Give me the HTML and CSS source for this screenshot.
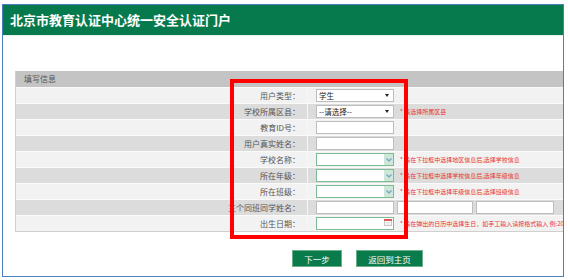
FILE: index.html
```html
<!DOCTYPE html>
<html lang="zh-CN">
<head>
  <meta charset="UTF-8" />
  <title>北京市教育认证中心统一安全认证门户</title>
  <link rel="stylesheet" href="styles.css">
</head>
<body>
  <div class="frame">
    <div class="top-bar">北京市教育认证中心统一安全认证门户</div>

    <div class="form-table">
      <div class="caption">填写信息</div>

      <div class="row">
        <div class="label">用户类型：</div>
        <div class="field">
          <div class="select"><span>学生</span><i class="arrow"></i></div>
        </div>
      </div>

      <div class="row">
        <div class="label">学校所属区县：</div>
        <div class="field">
          <div class="select"><span>--请选择--</span><i class="arrow"></i></div>
          <span class="hint">* 请选择所属区县</span>
        </div>
      </div>

      <div class="row">
        <div class="label">教育ID号：</div>
        <div class="field"><div class="input"></div></div>
      </div>

      <div class="row">
        <div class="label">用户真实姓名：</div>
        <div class="field"><div class="input"></div></div>
      </div>

      <div class="row">
        <div class="label">学校名称：</div>
        <div class="field">
          <div class="combo">
            <span class="combo-btn">
              <svg width="6" height="4" viewBox="0 0 6 4"><path d="M0.5 0.5 L3 3 L5.5 0.5" fill="none" stroke="#6a9fd4" stroke-width="1.1"/></svg>
            </span>
          </div>
          <span class="hint">* 请在下拉框中选择地区信息后,选择学校信息</span>
        </div>
      </div>

      <div class="row">
        <div class="label">所在年级：</div>
        <div class="field">
          <div class="combo">
            <span class="combo-btn">
              <svg width="6" height="4" viewBox="0 0 6 4"><path d="M0.5 0.5 L3 3 L5.5 0.5" fill="none" stroke="#6a9fd4" stroke-width="1.1"/></svg>
            </span>
          </div>
          <span class="hint">* 请在下拉框中选择学校信息后,选择年级信息</span>
        </div>
      </div>

      <div class="row">
        <div class="label">所在班级：</div>
        <div class="field">
          <div class="combo">
            <span class="combo-btn">
              <svg width="6" height="4" viewBox="0 0 6 4"><path d="M0.5 0.5 L3 3 L5.5 0.5" fill="none" stroke="#6a9fd4" stroke-width="1.1"/></svg>
            </span>
          </div>
          <span class="hint">* 请在下拉框中选择年级信息后,选择班级信息</span>
        </div>
      </div>

      <div class="row">
        <div class="label">三个同班同学姓名：</div>
        <div class="field trio">
          <div class="input"></div>
          <div class="input narrow"></div>
          <div class="input"></div>
        </div>
      </div>

      <div class="row">
        <div class="label">出生日期：</div>
        <div class="field">
          <div class="combo date">
            <svg class="cal" width="8" height="7" viewBox="0 0 8 7">
              <rect x="0.5" y="0.5" width="7" height="6" fill="#fff" stroke="#c8c8c8"/>
              <rect x="0" y="0" width="8" height="2" fill="#e2585a"/>
              <path d="M1.5 3.5 H6.5 M1.5 5 H6.5" stroke="#d6d6d6" stroke-width="0.8"/>
            </svg>
          </div>
          <span class="hint">* 请在弹出的日历中选择生日，如手工输入请按格式输入 例:2010-01-01</span>
        </div>
      </div>
    </div>

    <div class="actions">
      <button class="btn">下一步</button>
      <button class="btn wide">返回到主页</button>
    </div>
  </div>

  <div class="highlight"></div>
</body>
</html>
```

FILE: styles.css
```css
body {
  margin: 0;
  font-family: "Noto Sans CJK SC", "Noto Sans", sans-serif;
  background-color: #fff;
  width: 568px;
  height: 280px;
  position: relative;
  overflow: hidden;
}

.frame {
  margin: 4px 0 0 2px;
  width: 560px;
  height: 271px;
  border: 1px solid #4a7fc0;
  overflow: hidden;
}

.top-bar {
  height: 30px;
  line-height: 30px;
  background-color: #067a4c;
  color: #fff;
  font-size: 13px;
  font-weight: bold;
  padding-left: 7px;
  border-bottom: 1px solid #e6efe9;
}

.form-table {
  margin: 35px 0 0 12px;
  border-left: 1px solid #cfcfcf;
  border-bottom: 1px solid #cfcfcf;
}

.caption {
  height: 16px;
  line-height: 16px;
  background-color: #c4c4c4;
  color: #555;
  font-size: 8px;
  padding-left: 8px;
}

.row {
  display: flex;
  height: 15px;
  border-top: 1px solid #fafafa;
  background-color: #f2f2f2;
}

.row:nth-of-type(odd) {
  background-color: #dcdcdc;
}

.label {
  width: 292px;
  flex: none;
  border-right: 1px solid #f7f7f7;
  text-align: right;
  font-size: 8px;
  line-height: 15px;
  color: #555;
  padding-right: 7px;
  box-sizing: border-box;
  white-space: nowrap;
}

.field {
  display: flex;
  align-items: center;
  padding-left: 8px;
  white-space: nowrap;
}

.trio {
  gap: 3px;
}

.select, .input, .combo {
  width: 76px;
  height: 11px;
  background-color: #fff;
  border: 1px solid #bdbdbd;
  box-sizing: content-box;
  position: relative;
  flex: none;
}

.input.narrow {
  width: 74px;
}

.select span {
  font-size: 7.5px;
  line-height: 11px;
  color: #222;
  padding-left: 2px;
  display: block;
}

.arrow {
  position: absolute;
  right: 4px;
  top: 4px;
  border-left: 2px solid transparent;
  border-right: 2px solid transparent;
  border-top: 3px solid #222;
}

.combo {
  border-color: #7cbd94;
}

.combo-btn {
  position: absolute;
  right: 0;
  top: 0;
  width: 9px;
  height: 11px;
  background-color: #cfe7d8;
  display: flex;
  align-items: center;
  justify-content: center;
}

.cal {
  position: absolute;
  right: 1px;
  top: 1px;
}

.hint {
  color: #e8333b;
  font-size: 6px;
  margin-left: 6px;
}

.actions {
  display: flex;
  gap: 14px;
  margin: 18px 0 0 289px;
}

.btn {
  width: 50px;
  height: 17px;
  padding: 0;
  background-color: #0a7b4d;
  color: #fff;
  border: 1px solid #6cae88;
  font-family: "Noto Sans CJK SC", sans-serif;
  font-size: 8.5px;
  cursor: pointer;
}

.btn.wide {
  width: 67px;
}

.highlight {
  position: absolute;
  left: 230px;
  top: 79px;
  width: 178px;
  height: 160px;
  border: 4px solid #ff0000;
  box-sizing: border-box;
}
```
